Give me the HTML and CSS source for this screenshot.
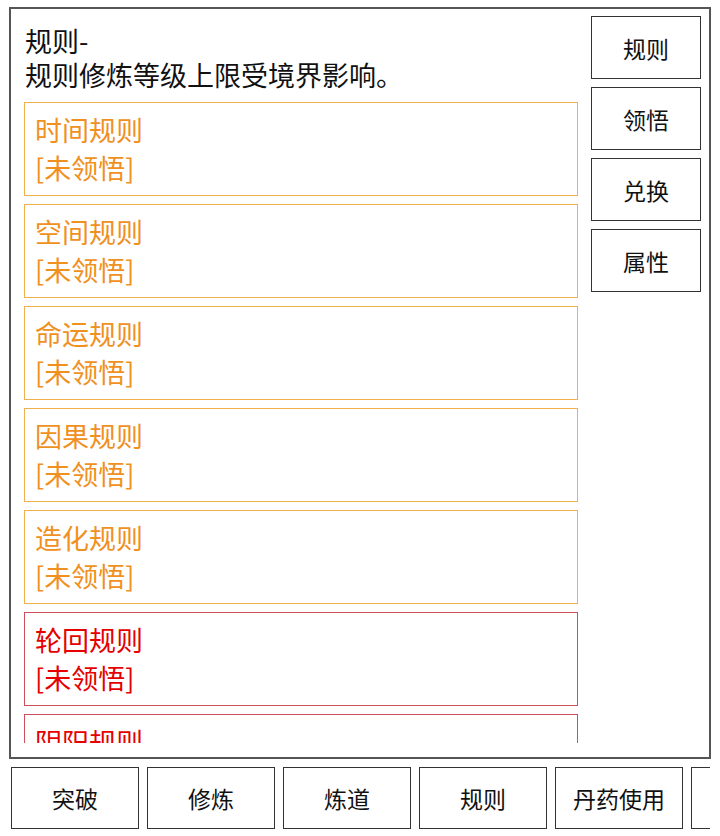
FILE: index.html
```html
<!DOCTYPE html>
<html lang="zh-CN">
<head>
    <meta charset="UTF-8">
    <meta name="viewport" content="width=device-width, initial-scale=1.0">
    <title>规则</title>
    <link rel="stylesheet" href="styles.css">
</head>
<body>

<div class="panel">
    <!-- ===== RULE LIST ===== -->
    <div class="main">
        <div class="intro">
            <div>规则-</div>
            <div>规则修炼等级上限受境界影响。</div>
        </div>
        <div class="rule-list">
            <div class="rule-item">
                <div class="rule-name">时间规则</div>
                <div class="rule-state">[未领悟]</div>
            </div>
            <div class="rule-item">
                <div class="rule-name">空间规则</div>
                <div class="rule-state">[未领悟]</div>
            </div>
            <div class="rule-item">
                <div class="rule-name">命运规则</div>
                <div class="rule-state">[未领悟]</div>
            </div>
            <div class="rule-item">
                <div class="rule-name">因果规则</div>
                <div class="rule-state">[未领悟]</div>
            </div>
            <div class="rule-item">
                <div class="rule-name">造化规则</div>
                <div class="rule-state">[未领悟]</div>
            </div>
            <div class="rule-item high">
                <div class="rule-name">轮回规则</div>
                <div class="rule-state">[未领悟]</div>
            </div>
            <div class="rule-item high">
                <div class="rule-name">阴阳规则</div>
                <div class="rule-state">[未领悟]</div>
            </div>
        </div>
    </div>

    <!-- ===== SIDE TABS ===== -->
    <div class="side">
        <button class="side-btn">规则</button>
        <button class="side-btn">领悟</button>
        <button class="side-btn">兑换</button>
        <button class="side-btn">属性</button>
    </div>
</div>

<!-- ===== BOTTOM MENU ===== -->
<div class="menu">
    <button class="menu-btn">突破</button>
    <button class="menu-btn">修炼</button>
    <button class="menu-btn">炼道</button>
    <button class="menu-btn">规则</button>
    <button class="menu-btn">丹药使用</button>
    <button class="menu-btn">法宝炼制</button>
</div>

</body>
</html>
```

FILE: styles.css
```css
:root {
    --text: #111111;
    --frame: #555555;
    --btn-border: #333333;
    --orange: #f0901e;
    --orange-border: #f0b050;
    --red: #e60000;
    --red-border: #cc505c;
    --font-family: "Noto Sans CJK SC", "Noto Sans", sans-serif;
}
body {
    font-family: var(--font-family);
    background-color: #ffffff;
    color: var(--text);
    margin: 0;
    overflow: hidden;
}
button {
    font-family: var(--font-family);
    background-color: #ffffff;
    color: var(--text);
    cursor: pointer;
    padding: 0;
}
.panel {
    display: flex;
    height: 752px;
    margin: 7px 9px 0 9px;
    border: 2px solid var(--frame);
    box-sizing: border-box;
}
.main {
    flex: 1;
    display: flex;
    flex-direction: column;
    min-width: 0;
    padding: 15px 0 14px 13px;
}
.intro {
    font-size: 27px;
    line-height: 34px;
    padding-left: 1px;
    margin-bottom: 10px;
}
.rule-list {
    flex: 1;
    overflow: hidden;
}
.rule-item {
    height: 94px;
    box-sizing: border-box;
    padding: 8px 10px;
    margin-bottom: 8px;
    border: 1.5px solid var(--orange-border);
    color: var(--orange);
    font-size: 27px;
    line-height: 38px;
}
.rule-item.high {
    border-color: var(--red-border);
    color: var(--red);
}
.side {
    width: 110px;
    padding: 7px 8px 0 13px;
    display: flex;
    flex-direction: column;
    gap: 8px;
}
.side-btn {
    height: 63px;
    border: 1.5px solid var(--btn-border);
    font-size: 23px;
}
.menu {
    display: flex;
    gap: 8px;
    margin: 8px 10px 0 11px;
    overflow: hidden;
}
.menu-btn {
    flex: 0 0 128px;
    height: 62px;
    border: 1.5px solid var(--btn-border);
    font-size: 23px;
}
```
